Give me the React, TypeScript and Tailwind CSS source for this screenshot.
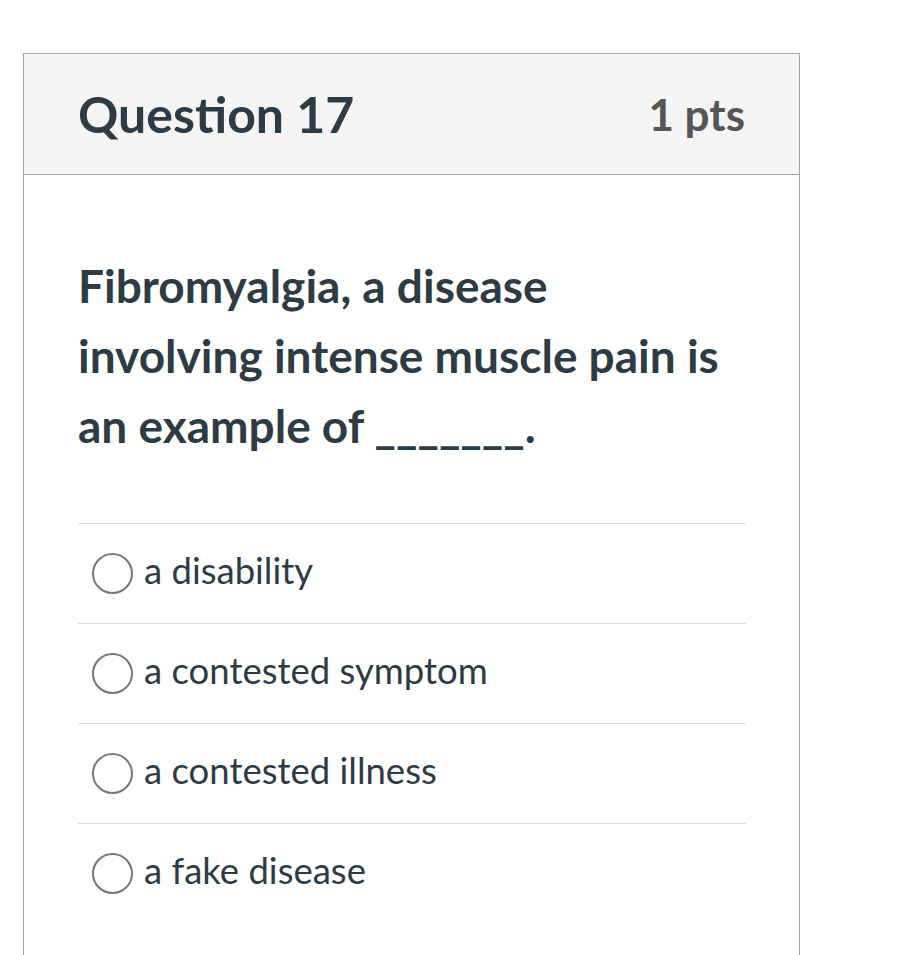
const options = ['a disability', 'a contested symptom', 'a contested illness', 'a fake disease'];

function Radio() {
  return <span className="block w-[41px] h-[41px] shrink-0 rounded-full border-[2.5px] border-[#767676] bg-white" />;
}

export default function App() {
  return (
    <div className="min-h-[955px] bg-white pt-[53px] pl-[23px] font-['Lato','Liberation_Sans',sans-serif] text-[#2d3b45]">
      <div className="w-[777px] h-[902px] border border-b-0 border-[#a5a5a5]">
        <header className="h-[121px] bg-[#f5f5f5] border-b border-[#a5a5a5] px-[54px] flex items-center justify-between">
          <h2 className="text-[50px] font-bold">Question 17</h2>
          <span className="text-[44px] font-bold text-[#555555]">1 pts</span>
        </header>
        <div className="pl-[54px] pr-[53px] pt-[76px]">
          <p className="text-[46px] font-bold leading-[70px]">
            Fibromyalgia, a disease
            <br />
            involving intense muscle pain is
            <br />
            an example of _______.
          </p>
          <div className="mt-[62px]">
            {options.map((o) => (
              <div key={o} className="h-[100px] border-t border-[#dddddd] flex items-center pl-[14px] gap-[11px]">
                <Radio />
                <span className="text-[36.5px] pb-[6px]">{o}</span>
              </div>
            ))}
          </div>
        </div>
      </div>
    </div>
  );
}
